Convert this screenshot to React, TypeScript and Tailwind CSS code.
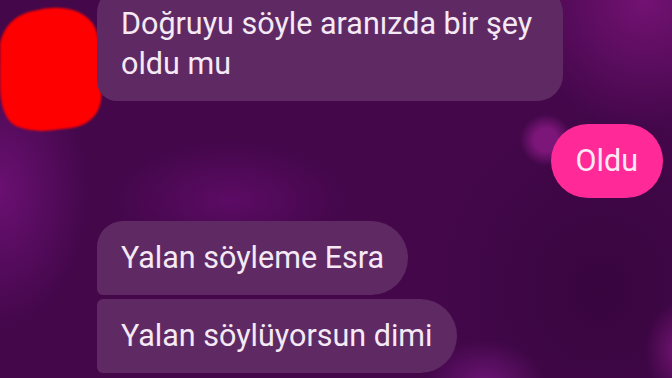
import React from "react";

function Blob() {
  return (
    <svg width="110" height="140" viewBox="0 0 110 140" className="absolute left-0 top-0">
      <defs>
        <filter id="soft" x="-10%" y="-10%" width="120%" height="120%">
          <feGaussianBlur stdDeviation="1.2" />
        </filter>
      </defs>
      <path
        d="M 38 10 C 58 5, 82 8, 93 24 C 103 40, 98 66, 101 86 C 104 110, 93 128, 62 129 C 46 131, 34 133, 16 126 C 3 119, 0 100, 0 82 L 0 44 C 4 24, 18 13, 38 10 Z"
        fill="#ff0000"
        filter="url(#soft)"
      />
    </svg>
  );
}

export default function App() {
  return (
    <div
      className="relative w-[672px] h-[378px] overflow-hidden bg-[#43074a] bg-[radial-gradient(ellipse_90px_140px_at_0px_190px,#6a1072,transparent),radial-gradient(circle_130px_at_645px_0px,#731273,transparent),radial-gradient(circle_26px_at_546px_140px,#7c1679_45%,transparent),radial-gradient(ellipse_120px_60px_at_230px_200px,#5c0b64,transparent),radial-gradient(ellipse_60px_45px_at_485px_385px,#6c1475,transparent),radial-gradient(ellipse_40px_50px_at_685px_350px,#7a1679,transparent),radial-gradient(ellipse_160px_180px_at_600px_290px,#38053f,transparent)]"
      style={{ fontFamily: "Roboto, 'Noto Sans', sans-serif" }}
    >
      <Blob />

      <div className="relative flex flex-col -mt-[13px] text-[30.5px] leading-[40px] text-[#f5e9f5]">
        <div className="ml-[97px] w-[466px] rounded-[26px] rounded-bl-[20px] bg-[#5f2a64] px-[24px] py-[17px]">
          Doğruyu söyle aranızda bir şey oldu mu
        </div>
        <div className="mt-[23px] mr-[9px] self-end rounded-full bg-[#ff2a98] px-[25px] py-[17px] text-[#fde8f4]">
          Oldu
        </div>
        <div className="mt-[23px] ml-[97px] self-start rounded-[37px] rounded-tl-[26px] rounded-bl-[6px] bg-[#5f2a64] px-[24px] py-[17px]">
          Yalan söyleme Esra
        </div>
        <div className="mt-[4px] ml-[97px] self-start rounded-[37px] rounded-tl-[6px] rounded-bl-[6px] bg-[#5f2a64] px-[24px] py-[17px]">
          Yalan söylüyorsun dimi
        </div>
      </div>
    </div>
  );
}
